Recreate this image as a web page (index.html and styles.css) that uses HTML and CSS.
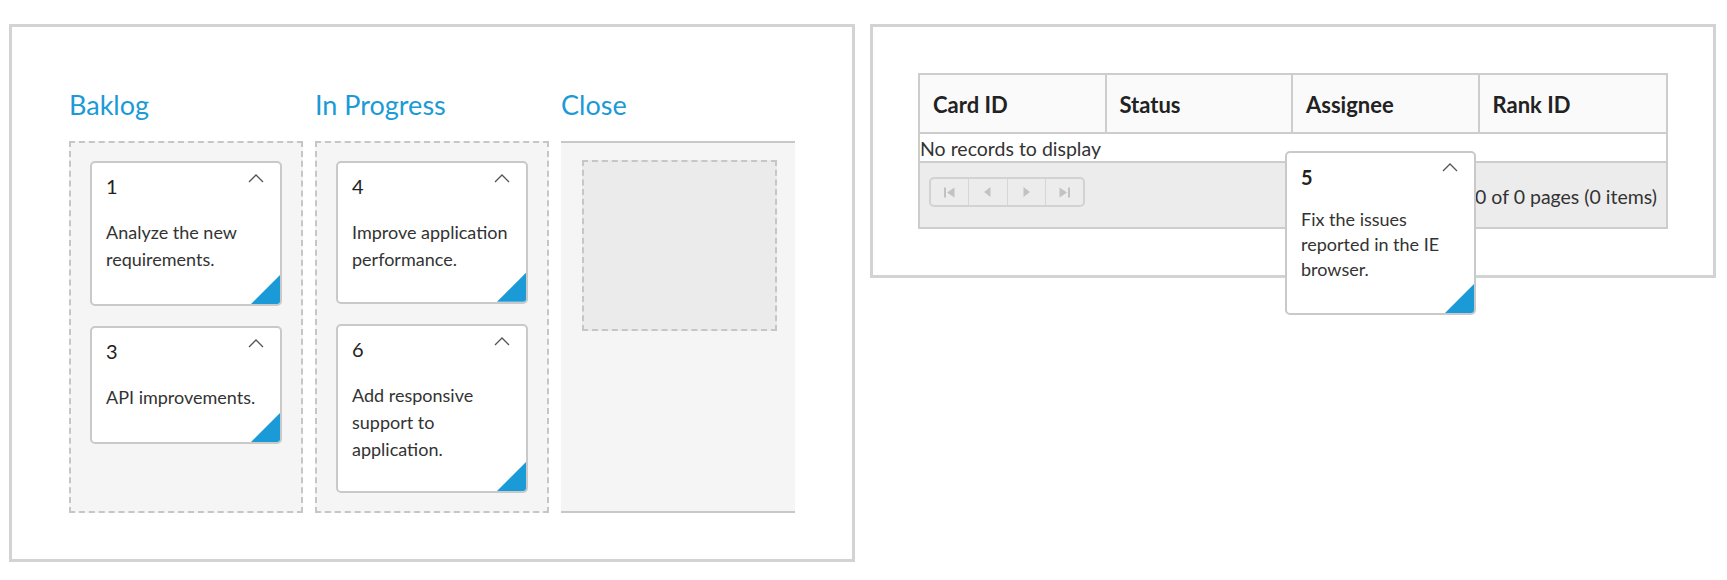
FILE: index.html
```html
<!DOCTYPE html>
<html lang="en">
<head>
<meta charset="utf-8">
<title>Kanban and Grid</title>
<link rel="stylesheet" href="styles.css">
</head>
<body>
<div class="page">
  <section class="panel panel-kanban">
    <div class="kanban">
      <div class="kcol">
        <h2 class="kcol-title">Baklog</h2>
        <div class="kcol-body drop">
          <div class="card">
            <div class="card-head"><span class="card-id">1</span><svg class="chev" width="16" height="9" viewBox="0 0 16 9"><polyline points="1,8 8,1 15,8"/></svg></div>
            <div class="card-text">Analyze the new requirements.</div>
          </div>
          <div class="card">
            <div class="card-head"><span class="card-id">3</span><svg class="chev" width="16" height="9" viewBox="0 0 16 9"><polyline points="1,8 8,1 15,8"/></svg></div>
            <div class="card-text">API improvements.</div>
          </div>
        </div>
      </div>
      <div class="kcol">
        <h2 class="kcol-title">In Progress</h2>
        <div class="kcol-body drop">
          <div class="card">
            <div class="card-head"><span class="card-id">4</span><svg class="chev" width="16" height="9" viewBox="0 0 16 9"><polyline points="1,8 8,1 15,8"/></svg></div>
            <div class="card-text">Improve application performance.</div>
          </div>
          <div class="card">
            <div class="card-head"><span class="card-id">6</span><svg class="chev" width="16" height="9" viewBox="0 0 16 9"><polyline points="1,8 8,1 15,8"/></svg></div>
            <div class="card-text">Add responsive support to application.</div>
          </div>
        </div>
      </div>
      <div class="kcol">
        <h2 class="kcol-title">Close</h2>
        <div class="kcol-body closed">
          <div class="placeholder"></div>
        </div>
      </div>
    </div>
  </section>

  <section class="panel panel-grid">
    <div class="grid">
      <div class="grid-head">
        <div class="hcell">Card ID</div>
        <div class="hcell">Status</div>
        <div class="hcell">Assignee</div>
        <div class="hcell">Rank ID</div>
      </div>
      <div class="grid-empty">No records to display</div>
      <div class="pager">
        <div class="pager-btns">
          <span class="pbtn"><svg width="11" height="11" viewBox="0 0 11 11"><rect x="0" y="0.5" width="2" height="10"/><polygon points="10.5,0.5 3,5.5 10.5,10.5"/></svg></span>
          <span class="pbtn"><svg width="7" height="10" viewBox="0 0 7 10"><polygon points="6.5,0 0,5 6.5,10"/></svg></span>
          <span class="pbtn"><svg width="7" height="10" viewBox="0 0 7 10"><polygon points="0.5,0 7,5 0.5,10"/></svg></span>
          <span class="pbtn"><svg width="11" height="11" viewBox="0 0 11 11"><polygon points="0.5,0.5 8,5.5 0.5,10.5"/><rect x="9" y="0.5" width="2" height="10"/></svg></span>
        </div>
        <div class="pager-info">0 of 0 pages (0 items)</div>
      </div>
    </div>
  </section>

  <div class="card card-drag">
    <div class="card-head"><span class="card-id">5</span><svg class="chev" width="16" height="9" viewBox="0 0 16 9"><polyline points="1,8 8,1 15,8"/></svg></div>
    <div class="card-text">Fix the issues reported in the IE browser.</div>
  </div>
</div>
</body>
</html>
```

FILE: styles.css
```css
* { box-sizing: border-box; }

html, body {
  margin: 0;
  background: #ffffff;
}

body {
  font-family: Lato, "Open Sans", sans-serif;
  font-size: 18px;
  color: #333333;
}

.page {
  position: relative;
  display: flex;
  align-items: flex-start;
  gap: 15px;
  padding: 24px 0 0 9px;
}

.panel {
  width: 846px;
  border: 3px solid #d3d3d3;
  flex: none;
}

.panel-kanban {
  height: 538px;
  padding: 61px 0 0 57px;
}

.panel-grid {
  height: 254px;
  padding: 46px 0 0 45px;
}

/* Kanban */
.kanban {
  display: flex;
  gap: 12px;
}

.kcol {
  width: 234px;
  flex: none;
}

.kcol-title {
  margin: 0 0 19px 0;
  font-size: 27px;
  line-height: 34px;
  font-weight: 400;
  color: #1b9ad6;
}

.kcol-body {
  height: 372px;
  background: #f5f5f5;
}

.kcol-body.drop {
  border: 2px dashed #c6c6c6;
  padding: 18px 19px;
  display: flex;
  flex-direction: column;
  gap: 20px;
}

.kcol-body.closed {
  border-top: 2px solid #c8c8c8;
  border-bottom: 2px solid #c8c8c8;
  padding: 17px 18px 0 21px;
}

.placeholder {
  width: 195px;
  height: 171px;
  background: #ebebeb;
  border: 2px dashed #c6c6c6;
}

/* Card */
.card {
  position: relative;
  background: #ffffff;
  border: 2px solid #c9c9c9;
  border-radius: 5px;
  overflow: hidden;
}

.card::after {
  content: "";
  position: absolute;
  right: 0;
  bottom: 0;
  width: 29px;
  height: 29px;
  background: #1a9bd7;
  clip-path: polygon(100% 0, 100% 100%, 0 100%);
}

.card-head {
  display: flex;
  justify-content: space-between;
  align-items: flex-start;
  padding: 8px 16px 0 14px;
}

.card-id {
  font-size: 20px;
  line-height: 30px;
  color: #222222;
}

.chev {
  margin-top: 3px;
  fill: none;
  stroke: #555555;
  stroke-width: 1.3;
}

.card-text {
  padding: 18px 8px 31px 14px;
  line-height: 27px;
  color: #333333;
}

.card-drag {
  position: absolute;
  left: 1285px;
  top: 151px;
  width: 191px;
  height: 164px;
}

.card-drag .card-head {
  padding-top: 9px;
}

.card-drag .card-id {
  font-weight: 700;
}

.card-drag .chev {
  margin-top: 1px;
}

.card-drag .card-text {
  padding-top: 15px;
  line-height: 25px;
}

/* Grid */
.grid {
  width: 750px;
  border: 2px solid #cdcdcd;
}

.grid-head {
  display: grid;
  grid-template-columns: repeat(4, 1fr);
  height: 59px;
  background: #fafafa;
  border-bottom: 2px solid #cdcdcd;
}

.hcell {
  display: flex;
  align-items: center;
  padding: 2px 0 0 13px;
  font-size: 22px;
  font-weight: 700;
  color: #222222;
  border-right: 2px solid #cdcdcd;
}

.hcell:last-child {
  border-right: none;
}

.grid-empty {
  height: 29px;
  font-size: 19.5px;
  line-height: 30px;
  border-bottom: 2px solid #cdcdcd;
  background: #ffffff;
}

.pager {
  height: 64px;
  background: #ececec;
  display: flex;
  justify-content: space-between;
  align-items: flex-start;
  padding: 14px 9px 0 9px;
}

.pager-btns {
  display: flex;
  width: 156px;
  height: 30px;
  border: 2px solid #d2d2d2;
  border-radius: 5px;
}

.pbtn {
  flex: 1;
  display: flex;
  align-items: center;
  justify-content: center;
  border-right: 1px solid #d6d6d6;
  fill: #c2c2c2;
}

.pbtn:last-child {
  border-right: none;
}

.pager-info {
  margin-top: 6px;
  font-size: 19.5px;
  line-height: 27px;
  color: #333333;
}
```
